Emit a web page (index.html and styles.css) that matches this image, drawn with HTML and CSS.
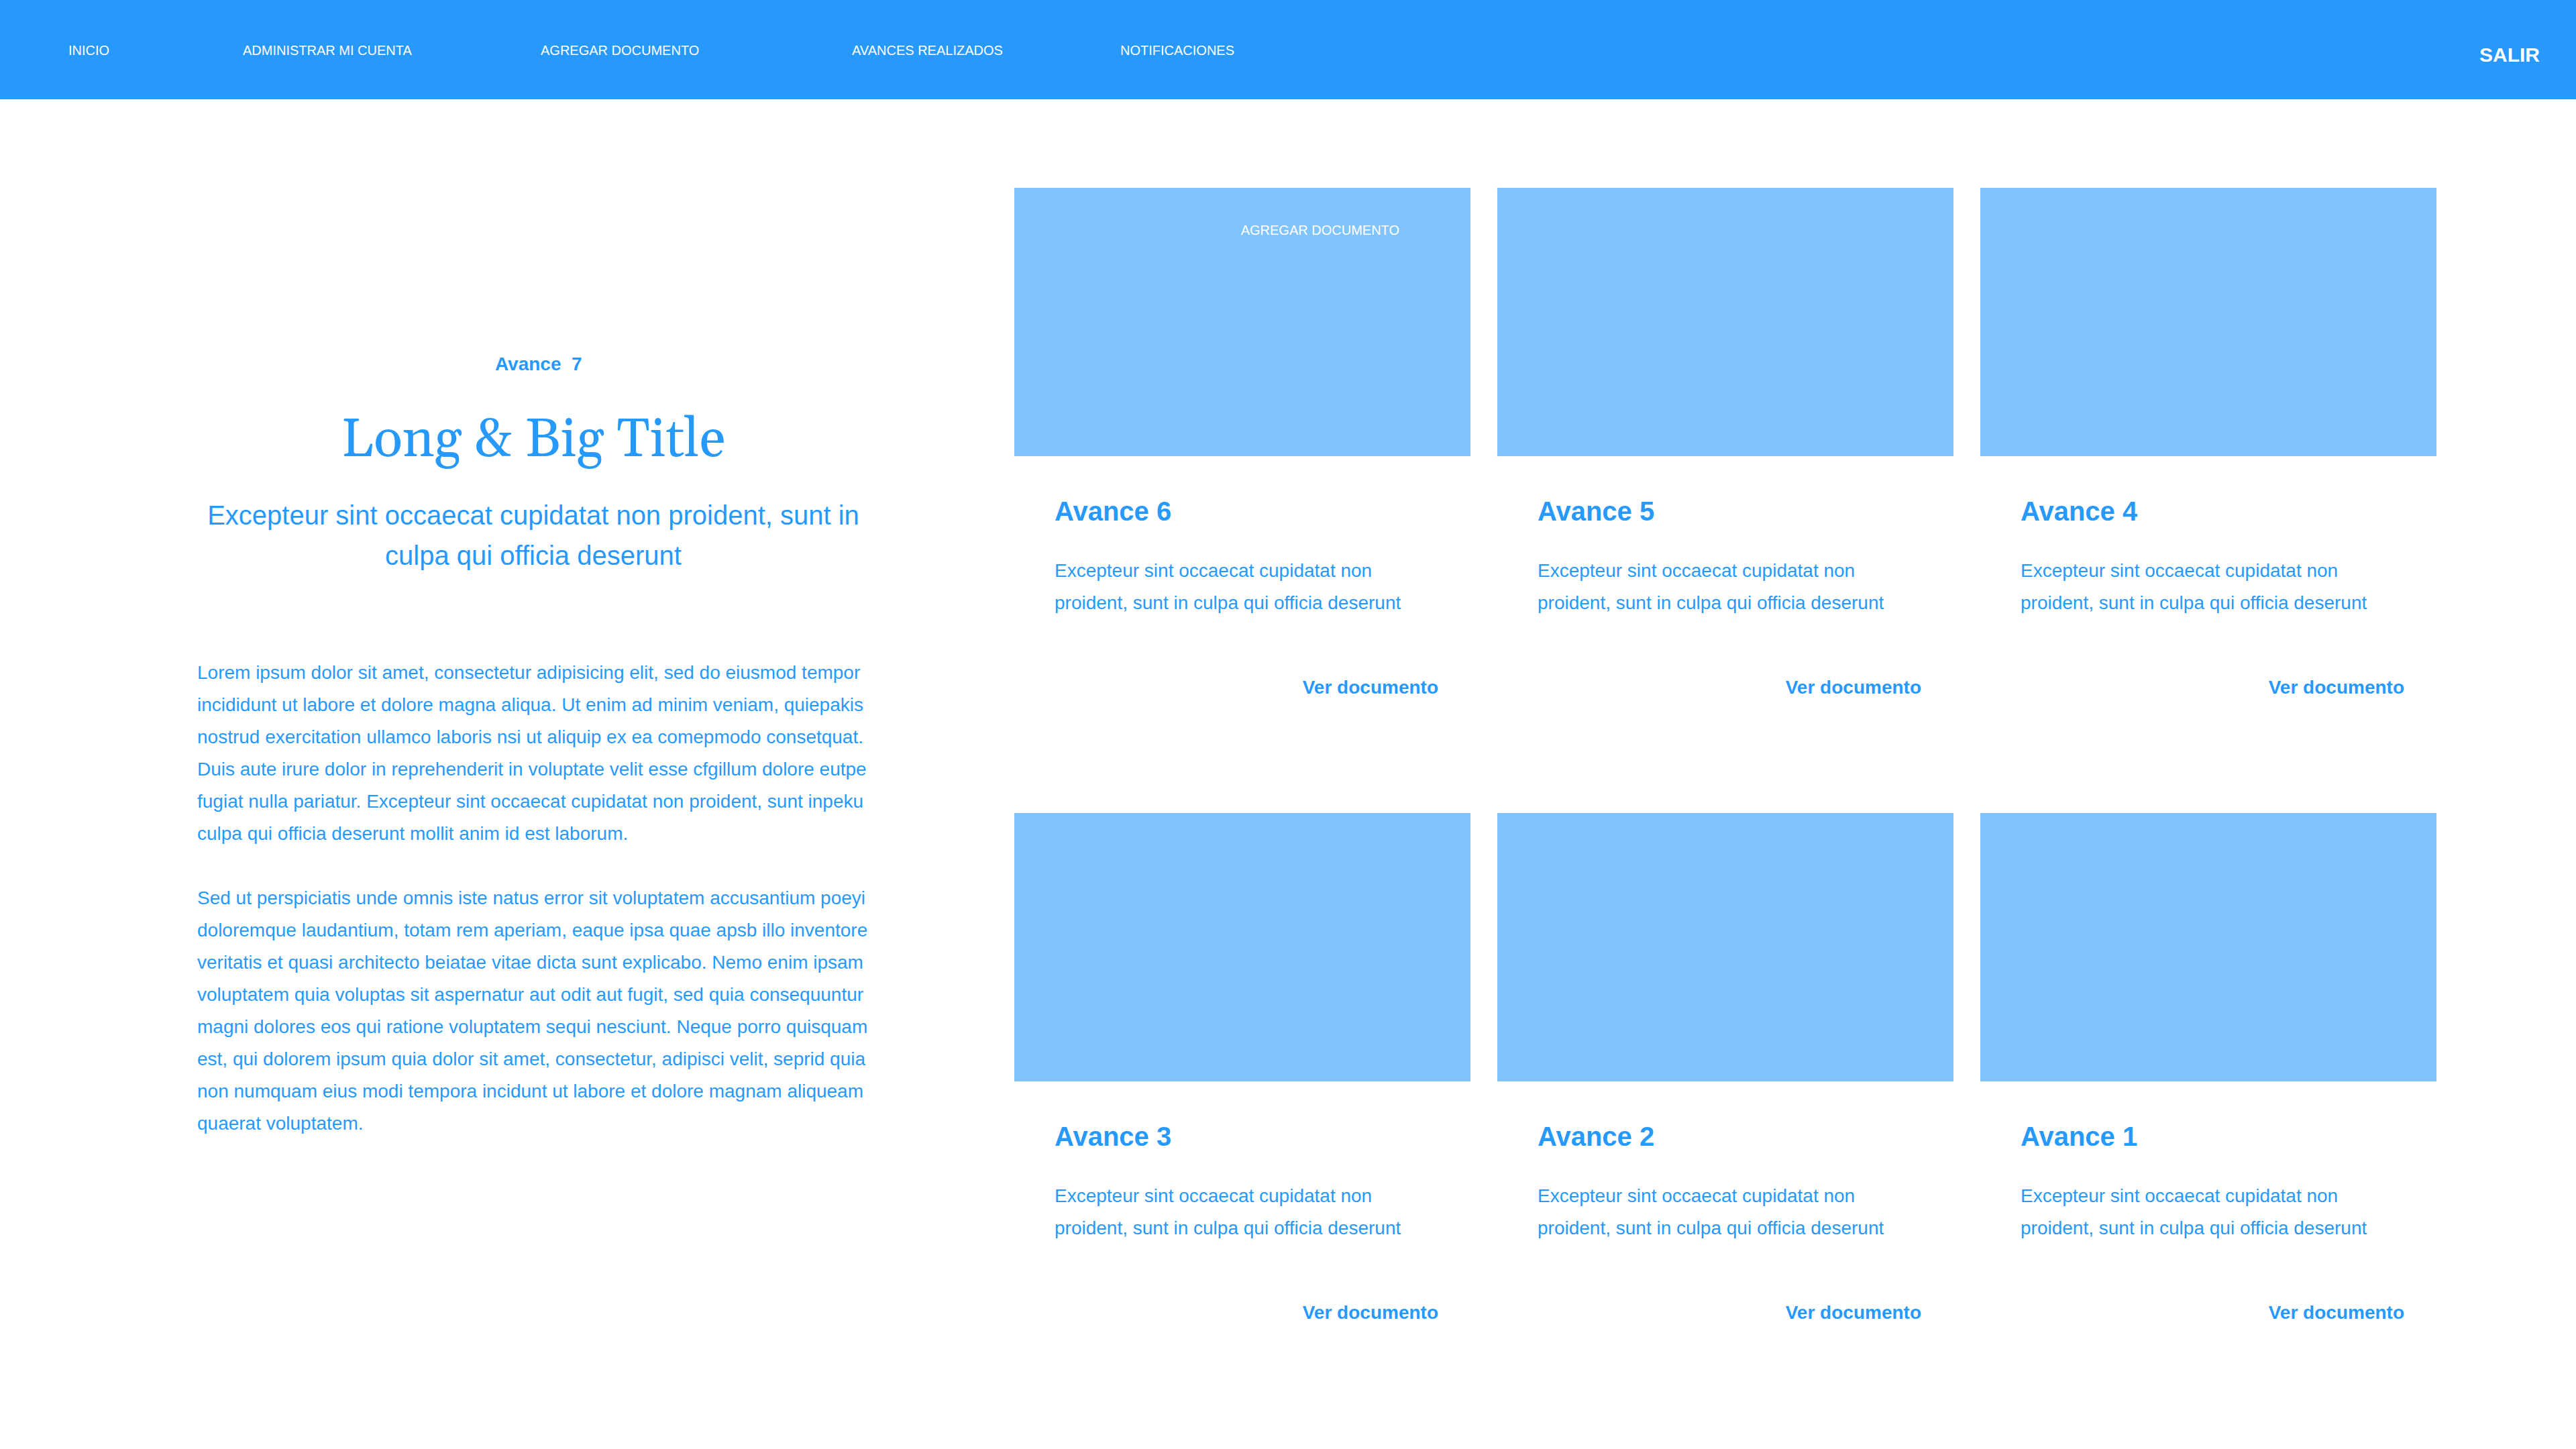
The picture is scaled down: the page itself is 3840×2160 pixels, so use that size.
FILE: index.html
```html
<!DOCTYPE html>
<html lang="es">
<head>
<meta charset="utf-8">
<meta name="viewport" content="width=device-width, initial-scale=1">
<title>Avances realizados</title>
<link rel="stylesheet" href="styles.css">
</head>
<body>
<header class="topbar">
  <nav class="topnav">
    <a href="#inicio">INICIO</a>
    <a href="#cuenta">ADMINISTRAR MI CUENTA</a>
    <a href="#agregar">AGREGAR DOCUMENTO</a>
    <a href="#avances">AVANCES REALIZADOS</a>
    <a href="#notificaciones">NOTIFICACIONES</a>
  </nav>
  <a class="logout" href="#salir">SALIR</a>
</header>
<main class="content">
  <article class="feature">
    <p class="eyebrow">&nbsp;&nbsp;Avance&nbsp;&nbsp;7</p>
    <h1 class="headline">Long &amp; Big Title</h1>
    <p class="lead">Excepteur sint occaecat cupidatat non proident, sunt in culpa qui officia deserunt</p>
    <div class="story">
      <p>Lorem ipsum dolor sit amet, consectetur adipisicing elit, sed do eiusmod tempor incididunt ut labore et dolore magna aliqua. Ut enim ad minim veniam, quiepakis nostrud exercitation ullamco laboris nsi ut aliquip ex ea comepmodo consetquat. Duis aute irure dolor in reprehenderit in voluptate velit esse cfgillum dolore eutpe fugiat nulla pariatur. Excepteur sint occaecat cupidatat non proident, sunt inpeku culpa qui officia deserunt mollit anim id est laborum.</p>
      <p>Sed ut perspiciatis unde omnis iste natus error sit voluptatem accusantium poeyi doloremque laudantium, totam rem aperiam, eaque ipsa quae apsb illo inventore veritatis et quasi architecto beiatae vitae dicta sunt explicabo. Nemo enim ipsam voluptatem quia voluptas sit aspernatur aut odit aut fugit, sed quia consequuntur magni dolores eos qui ratione voluptatem sequi nesciunt. Neque porro quisquam est, qui dolorem ipsum quia dolor sit amet, consectetur, adipisci velit, seprid quia non numquam eius modi tempora incidunt ut labore et dolore magnam aliqueam quaerat voluptatem.</p>
    </div>
  </article>
  <section class="cards">
    <article class="card">
      <div class="card-media"><a class="card-add" href="#agregar">AGREGAR DOCUMENTO</a></div>
      <div class="card-body">
        <h2 class="card-title">Avance 6</h2>
        <p class="card-text">Excepteur sint occaecat cupidatat non proident, sunt in culpa qui officia deserunt</p>
        <a class="card-link" href="#avance-6">Ver documento</a>
      </div>
    </article>
    <article class="card">
      <div class="card-media"></div>
      <div class="card-body">
        <h2 class="card-title">Avance 5</h2>
        <p class="card-text">Excepteur sint occaecat cupidatat non proident, sunt in culpa qui officia deserunt</p>
        <a class="card-link" href="#avance-5">Ver documento</a>
      </div>
    </article>
    <article class="card">
      <div class="card-media"></div>
      <div class="card-body">
        <h2 class="card-title">Avance 4</h2>
        <p class="card-text">Excepteur sint occaecat cupidatat non proident, sunt in culpa qui officia deserunt</p>
        <a class="card-link" href="#avance-4">Ver documento</a>
      </div>
    </article>
    <article class="card">
      <div class="card-media"></div>
      <div class="card-body">
        <h2 class="card-title">Avance 3</h2>
        <p class="card-text">Excepteur sint occaecat cupidatat non proident, sunt in culpa qui officia deserunt</p>
        <a class="card-link" href="#avance-3">Ver documento</a>
      </div>
    </article>
    <article class="card">
      <div class="card-media"></div>
      <div class="card-body">
        <h2 class="card-title">Avance 2</h2>
        <p class="card-text">Excepteur sint occaecat cupidatat non proident, sunt in culpa qui officia deserunt</p>
        <a class="card-link" href="#avance-2">Ver documento</a>
      </div>
    </article>
    <article class="card">
      <div class="card-media"></div>
      <div class="card-body">
        <h2 class="card-title">Avance 1</h2>
        <p class="card-text">Excepteur sint occaecat cupidatat non proident, sunt in culpa qui officia deserunt</p>
        <a class="card-link" href="#avance-1">Ver documento</a>
      </div>
    </article>
  </section>
</main>
</body>
</html>
```
FILE: styles.css
```css
:root {
  --blue: #2699fb;
  --blue-light: #7fc4fd;
}

* {
  box-sizing: border-box;
  margin: 0;
}

body {
  background: #fff;
  color: var(--blue);
  font: 28px/48px Arial, "Liberation Sans", sans-serif;
}

a {
  color: inherit;
  text-decoration: none;
}

/* Top bar */
.topbar {
  display: flex;
  align-items: flex-start;
  padding: 64px 54px 48px 102px;
  background: var(--blue);
  color: #fff;
}

.topnav {
  flex: 1;
  display: grid;
  grid-template-columns: 260fr 444fr 464fr 400fr 2026fr;
  font-size: 20px;
  line-height: 22px;
}

.logout {
  font-size: 30px;
  font-weight: bold;
  line-height: 36px;
}

/* Page body: current entry on the left, earlier ones on the right */
.content {
  display: grid;
  grid-template-columns: minmax(0, 1002fr) minmax(0, 2120fr);
  column-gap: 216px;
  padding: 132px 208px 132px 294px;
}

.feature {
  padding-top: 239px;
  text-align: center;
}

.eyebrow {
  font-weight: bold;
}

.headline {
  margin: 42px 0 33px;
  font: 80px/96px Georgia, Gelasio, "Noto Serif", "Liberation Serif", serif;
}

.lead {
  font-size: 40px;
  line-height: 60px;
}

.story {
  display: grid;
  gap: 48px;
  margin-top: 121px;
  text-align: left;
}

.cards {
  display: grid;
  grid-template-columns: repeat(3, minmax(0, 1fr));
  gap: 163px 40px;
  align-content: start;
}

.card-media {
  display: flex;
  justify-content: flex-end;
  align-items: flex-start;
  height: 400px;
  padding: 52px 106px;
  background: var(--blue-light);
}

.card-add {
  color: #fff;
  font-size: 20px;
  line-height: 22px;
}

.card-body {
  display: flex;
  flex-direction: column;
  padding: 52px 48px 0 60px;
}

.card-title {
  font-size: 40px;
  line-height: 60px;
}

.card-text {
  margin: 35px 0 78px;
}

.card-link {
  align-self: flex-end;
  font-weight: bold;
}
```
